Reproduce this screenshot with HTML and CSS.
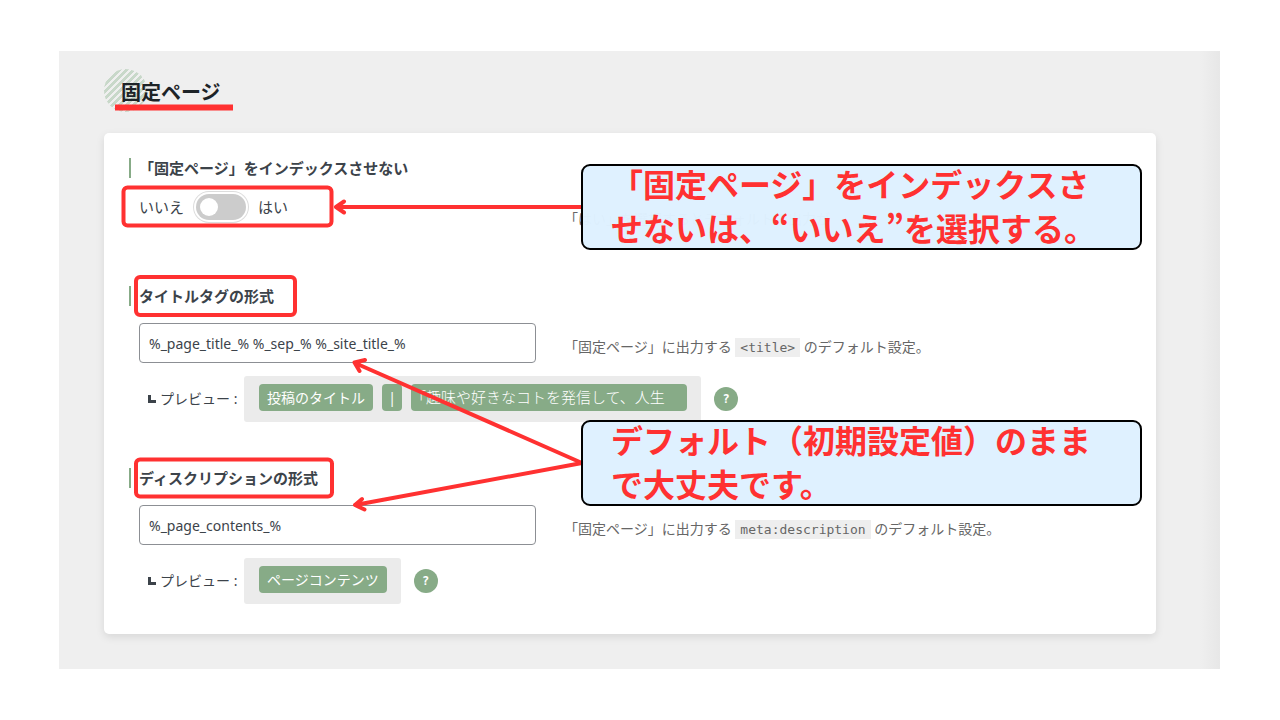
FILE: index.html
```html
<!DOCTYPE html>
<html lang="ja">
<head>
<meta charset="utf-8">
<meta name="viewport" content="width=device-width, initial-scale=1">
<title>固定ページ</title>
<link rel="stylesheet" href="styles.css">
</head>
<body>
<main class="panel">
  <h1 class="heading">固定ページ</h1>
  <form class="card">
    <section class="setting">
      <h2 class="setting-title">「固定ページ」をインデックスさせない</h2>
      <div class="setting-body">
        <label class="switch-row">いいえ <input class="switch" type="checkbox" role="switch"> はい</label>
        <p class="description">「はい」を選択するとデフォルトで出力が</p>
      </div>
    </section>
    <section class="setting">
      <h2 class="setting-title"><label for="title-format">タイトルタグの形式</label></h2>
      <div class="setting-body">
        <div class="field">
          <input class="text-input" id="title-format" type="text" value="%_page_title_% %_sep_% %_site_title_%">
          <div class="preview">
            <span class="preview-label"><span class="corner"></span>プレビュー :</span>
            <span class="preview-box"><span class="tag">投稿のタイトル</span><span class="tag tag-sep">|</span><span class="tag tag-site">「趣味や好きなコトを発信して、人生</span></span>
            <button class="help" type="button" aria-label="ヘルプ">?</button>
          </div>
        </div>
        <p class="description">「固定ページ」に出力する <code class="code">&lt;title&gt;</code> のデフォルト設定。</p>
      </div>
    </section>
    <section class="setting">
      <h2 class="setting-title"><label for="desc-format">ディスクリプションの形式</label></h2>
      <div class="setting-body">
        <div class="field">
          <input class="text-input" id="desc-format" type="text" value="%_page_contents_%">
          <div class="preview">
            <span class="preview-label"><span class="corner"></span>プレビュー :</span>
            <span class="preview-box"><span class="tag">ページコンテンツ</span></span>
            <button class="help" type="button" aria-label="ヘルプ">?</button>
          </div>
        </div>
        <p class="description">「固定ページ」に出力する <code class="code">meta:description</code> のデフォルト設定。</p>
      </div>
    </section>
  </form>
  <svg class="marks" width="1161" height="618" viewBox="59 51 1161 618" aria-hidden="true">
    <path class="underline" d="M115 107.500H233"/>
    <rect class="mark" x="123.500" y="187.500" width="208" height="38" rx="4"/>
    <rect class="mark" x="136" y="277" width="159" height="38" rx="4"/>
    <rect class="mark" x="136" y="459.500" width="196" height="37" rx="4"/>
    <path class="arrow" d="M582 207H337M344 201.500L336 207L344 212.500"/>
    <path class="arrow" d="M582 463L355 363M365 360L354.500 362.500L359.500 371"/>
    <path class="arrow" d="M582 463L355 505M362 499L355 505L364.500 509.500"/>
  </svg>
  <p class="callout callout-top">「固定ページ」をインデックスさせないは、“いいえ”を選択する。</p>
  <p class="callout callout-bottom">デフォルト（初期設定値）のままで大丈夫です。</p>
</main>
</body>
</html>
```
FILE: styles.css
```css
* {
  box-sizing: border-box;
}

body {
  margin: 0;
  padding: 51px 60px 51px 59px;
  background: #fff;
  color: #3c434a;
  font-family: "Noto Sans", "Noto Sans CJK JP", sans-serif;
  font-size: 15px;
  line-height: 20px;
}

.panel {
  position: relative;
  padding: 28px 64px 35px 45px;
  background: linear-gradient(to left, #e7e7e7, #efefef 20px);
}

.heading {
  position: relative;
  z-index: 0;
  margin: 0;
  padding-left: 17px;
  color: #1d2327;
  font-size: 20px;
  font-weight: 700;
  line-height: 28px;
}

.heading::before {
  content: "";
  position: absolute;
  z-index: -1;
  top: -10px;
  left: 0;
  width: 43px;
  height: 43px;
  border-radius: 50%;
  background: repeating-linear-gradient(135deg, #c8d8c9 0 3px, #efefef 3px 5px);
}

.card {
  display: flex;
  flex-direction: column;
  gap: 46px;
  margin-top: 26px;
  padding: 25px 25px 30px;
  border-radius: 5px;
  background: #fff;
  box-shadow: 0 3px 8px rgba(0, 0, 0, 0.1);
}

.setting-title {
  margin: 0;
  padding-left: 8px;
  border-left: 2px solid #87ab87;
  font-size: 15px;
  font-weight: 700;
  line-height: 20px;
}

.setting-body {
  display: grid;
  grid-template-columns: 397px minmax(0, 1fr);
  column-gap: 28px;
  min-height: 45px;
  margin: 17px 0 0 10px;
}

.switch-row {
  display: flex;
  align-items: center;
  gap: 12px;
  height: 24px;
}

.switch {
  appearance: none;
  display: flex;
  align-items: center;
  width: 50px;
  height: 26px;
  margin: 0;
  padding: 0 4px;
  border-radius: 13px;
  background: #ccc;
  box-shadow: 0 0 0 2px #fff, 0 0 0 3px #ddd;
}

.switch::before {
  content: "";
  width: 18px;
  height: 18px;
  border-radius: 50%;
  background: #fff;
}

.switch:checked {
  justify-content: flex-end;
  background: #87ab87;
}

.description {
  margin: 13px 0 0;
  color: #666;
  font-size: 14px;
  line-height: 22px;
}

.code {
  padding: 2px 5px;
  background: #eee;
  color: #666;
  font-family: "DejaVu Sans Mono", monospace;
  font-size: 13px;
}

.text-input {
  width: 100%;
  height: 40px;
  padding: 0 9px;
  border: 1px solid #8c8f94;
  border-radius: 4px;
  background: #fff;
  color: #3c434a;
  font: inherit;
  font-size: 14px;
}

.preview {
  display: flex;
  align-items: center;
  width: max-content;
  margin-top: 13px;
}

.preview-label {
  display: flex;
  align-items: center;
  gap: 4px;
  width: 105px;
  padding-left: 9px;
  font-size: 14px;
}

.corner {
  width: 8px;
  height: 8px;
  border: solid #3c434a;
  border-width: 0 0 3px 3px;
}

.preview-box {
  display: flex;
  gap: 9px;
  padding: 8px 14px 11px 15px;
  border-radius: 3px;
  background: #ebebeb;
}

.tag {
  padding: 0 8px;
  border-radius: 4px;
  background: #87ab87;
  color: #fff;
  font-size: 14px;
  line-height: 27px;
}

.tag-sep {
  width: 20px;
  padding: 0;
  text-align: center;
}

.tag-site {
  width: 276px;
  padding: 0;
  font-size: 15px;
  font-weight: 300;
}

.help {
  width: 24px;
  height: 24px;
  margin-left: 13px;
  padding: 0;
  border: 0;
  border-radius: 50%;
  background: #87ab87;
  color: #fff;
  font: 700 12px "DejaVu Sans Mono", monospace;
}

.marks {
  position: absolute;
  top: 0;
  left: 0;
  fill: none;
  stroke: #ff3131;
  stroke-width: 4;
  pointer-events: none;
}

.underline {
  stroke-width: 6;
}

.arrow {
  stroke-linecap: round;
  stroke-linejoin: round;
}

.callout {
  position: absolute;
  left: 522px;
  display: flex;
  align-items: center;
  width: 561px;
  height: 86px;
  margin: 0;
  padding: 0 40px 4px 28px;
  border: 2px solid #000;
  border-radius: 9px;
  background: rgba(222, 241, 255, 0.98);
  color: #ff3131;
  font-family: "Noto Sans CJK JP", sans-serif;
  font-size: 32px;
  font-weight: 700;
  line-height: 44px;
  word-break: break-all;
}

.callout-top {
  top: 113px;
}

.callout-bottom {
  top: 369px;
}
```
